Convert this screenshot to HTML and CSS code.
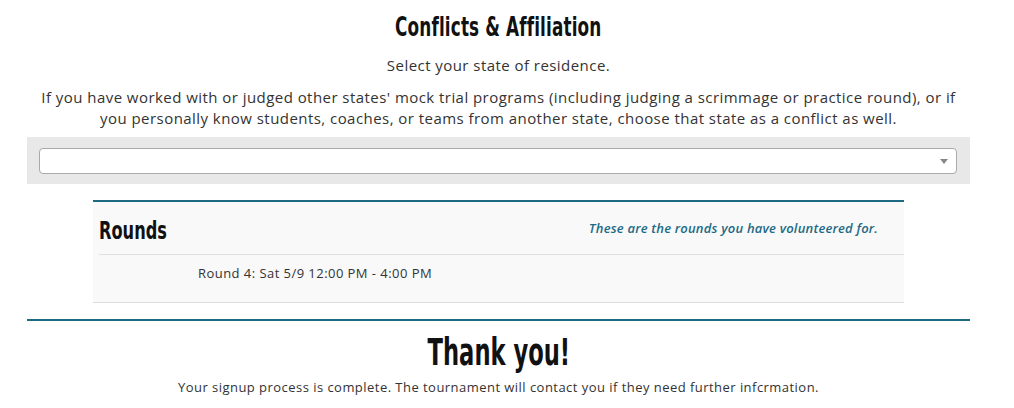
FILE: index.html
```html
<!DOCTYPE html>
<html lang="en">
<head>
    <meta charset="UTF-8">
    <meta name="viewport" content="width=device-width, initial-scale=1.0">
    <title>Signup Complete</title>
    <link rel="stylesheet" href="styles.css">
</head>
<body>
    <div class="page">
        <!-- conflicts -->
        <div class="conflicts">
            <h2 class="section-title"><span>Conflicts &amp; Affiliation</span></h2>
            <p class="lead">Select your state of residence.</p>
            <p class="note">
                If you have worked with or judged other states' mock trial programs (including judging a scrimmage or practice round), or if<br>
                you personally know students, coaches, or teams from another state, choose that state as a conflict as well.
            </p>
            <div class="state-bar">
                <div class="select-box">
                    <span class="caret"></span>
                </div>
            </div>
        </div>

        <!-- rounds the judge signed up for -->
        <div class="rounds-card">
            <div class="card-head">
                <h3><span>Rounds</span></h3>
                <span class="hint">These are the rounds you have volunteered for.</span>
            </div>
            <div class="round-row">Round 4: Sat 5/9 12:00 PM - 4:00 PM</div>
        </div>

        <hr class="divider">

        <div class="thanks">
            <h1><span>Thank you!</span></h1>
            <p>Your signup process is complete. The tournament will contact you if they need further infcrmation.</p>
        </div>
    </div>
</body>
</html>
```

FILE: styles.css
```css
body {
    font-family: "Open Sans", "Liberation Sans", sans-serif;
    color: #333;
    background: #fff;
    margin: 0;
    padding: 0;
}

.page {
    width: 943px;
    margin-left: 27px;
}

/* narrow bold headings, squeezed since no narrow face is installed */
h1, h2, h3 {
    font-family: "DejaVu Sans Condensed", "Liberation Sans", sans-serif;
    font-weight: bold;
    color: #111;
    margin: 0;
}

h1 span, h2 span, h3 span {
    display: inline-block;
    transform: scaleX(0.72);
}

.conflicts {
    text-align: center;
}

.section-title {
    font-size: 26px;
    line-height: 30px;
    padding-top: 12px;
    letter-spacing: 0.2px;
}

.lead {
    font-size: 15px;
    letter-spacing: 0.45px;
    line-height: 21px;
    margin: 13px 0 11px;
}

.note {
    font-size: 15px;
    letter-spacing: 0.45px;
    line-height: 21px;
    margin: 0 0 8px;
}

.state-bar {
    background: #e8e8e8;
    padding: 11px 13px 10px 12px;
}

.select-box {
    height: 24px;
    background: #fff;
    border: 1px solid #aaa;
    border-radius: 4px;
    display: flex;
    align-items: center;
    justify-content: flex-end;
    padding-right: 8px;
}

.caret {
    width: 0;
    height: 0;
    border-left: 4px solid transparent;
    border-right: 4px solid transparent;
    border-top: 5px solid #888;
}

.rounds-card {
    width: 811px;
    margin: 16px auto 0;
    background: #f9f9f9;
    border-top: 2px solid #1e6a82;
    border-bottom: 1px solid #ddd;
}

.card-head {
    display: flex;
    justify-content: space-between;
    align-items: center;
    height: 52px;
    margin-left: 6px;
    border-bottom: 1px solid #e0e0e0;
}

.card-head h3 {
    font-size: 25px;
    padding-top: 5px;
}

.card-head h3 span {
    transform-origin: left center;
}

.hint {
    font-size: 13px;
    font-style: italic;
    font-weight: 600;
    letter-spacing: 0.2px;
    color: #1d6a85;
    padding-right: 26px;
}

.round-row {
    font-size: 13px;
    letter-spacing: 0.45px;
    height: 47px;
    line-height: 37px;
    padding-left: 105px;
}

.divider {
    border: 0;
    border-top: 2px solid #1e6a82;
    margin: 16px 0 0;
}

.thanks {
    text-align: center;
}

.thanks h1 {
    font-size: 37px;
    line-height: 40px;
    margin-top: 12px;
}

.thanks h1 span {
    transform: scaleX(0.68);
}

.thanks p {
    font-size: 13px;
    letter-spacing: 0.46px;
    margin: 5px 0 0;
}
```
